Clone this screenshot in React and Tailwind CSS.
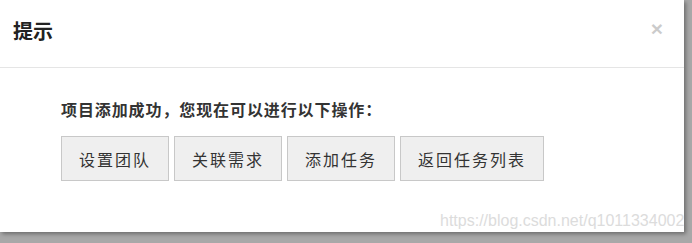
export default function App() {
  const actions = ["设置团队", "关联需求", "添加任务", "返回任务列表"];

  return (
    <div
      className="relative w-[692px] h-[243px] bg-[#a8a8a8] overflow-hidden"
      style={{ fontFamily: '"Noto Sans CJK SC", "Liberation Sans", sans-serif' }}
    >
      <div className="w-[684px] h-[232px] bg-white shadow-[2px_2px_4px_rgba(0,0,0,0.35)]">
        {/* header */}
        <div className="flex items-start justify-between h-[68px] border-b border-[#e5e5e5] pl-[13px] pr-[21px] pt-[17px]">
          <h4 className="text-[20px] leading-[28px] font-bold text-[#222]">提示</h4>
          <button
            className="self-start text-[21px] leading-[21px] font-bold text-black opacity-20 mt-[1px]"
            style={{ fontFamily: '"Liberation Sans", sans-serif' }}
          >
            ×
          </button>
        </div>

        {/* body */}
        <div className="pl-[61px] pt-[29px]">
          <p className="text-[16px] leading-[24px] font-bold text-[#333] tracking-[0.9px]">
            项目添加成功，您现在可以进行以下操作：
          </p>
          <div className="flex gap-[5px] mt-[15px]">
            {actions.map((label) => (
              <button
                key={label}
                className="h-[45px] px-[17px] border border-[#c8c8c8] bg-[#efefef] text-[16px] leading-[24px] text-[#333] tracking-[2px]"
              >
                {label}
              </button>
            ))}
          </div>
        </div>
      </div>

      <span
        className="absolute left-[440px] top-[211px] text-[16px] leading-[20px] text-[#dcdcdc]"
        style={{ fontFamily: '"Liberation Sans", sans-serif' }}
      >
        https://blog.csdn.net/q1011334002
      </span>
    </div>
  );
}
